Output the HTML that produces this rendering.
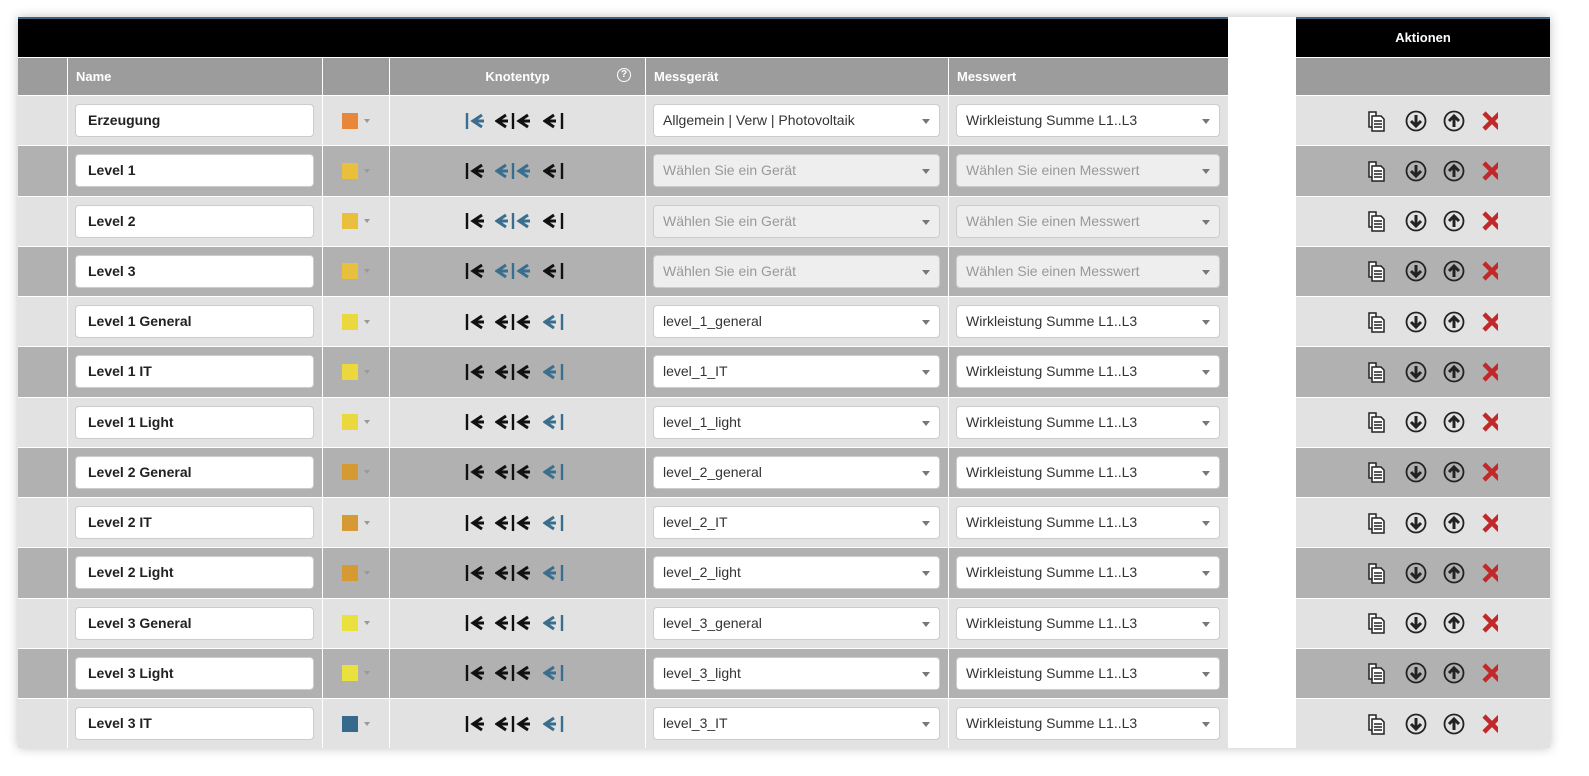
<!DOCTYPE html>
<html style="width:1589px;height:776px;overflow:hidden"><head><meta charset="utf-8"><style>
*{box-sizing:border-box;margin:0;padding:0}
body{width:1589px;height:776px;background:#fff;font-family:"Liberation Sans",Arial,sans-serif;position:relative;overflow:hidden}
.wrap{position:absolute;left:18px;top:17px;width:1532px;height:731px;box-shadow:0 0 10px rgba(0,0,0,.25)}
.t{position:absolute;top:17px;left:18px;width:1210px}
.a{position:absolute;top:17px;left:1296px;width:254px}
.bar{height:2px;background:#3d6380}
.blk{height:38px;background:#000;color:#fff;font-weight:bold;font-size:13px;text-align:center;line-height:38px}
.r{display:flex;border-top:1px solid #fff}
.h{height:38px;background:#9c9c9c;color:#fff;font-weight:bold;font-size:13px}
.row{height:50.25px}
.l{background:#e2e2e2}.d{background:#b1b1b1}
.c{border-left:1px solid #fff;position:relative;display:flex;align-items:center;flex:none}
.c:first-child{border-left:none}
.w0{width:49px}.w1{width:255px}.w2{width:67px}.w3{width:256px}.w4{width:303px}.w5{width:280px}
.inp{position:absolute;left:7px;width:239px;height:33px;background:#fff;border:1px solid #ccc;border-radius:4px;font-weight:bold;font-size:14px;color:#222;padding-left:12px;line-height:31px}
.sw{position:absolute;left:19px;width:16px;height:16px}
.car{position:absolute;left:41px;top:50%;margin-top:-2px;border:3px solid transparent;border-top:4px solid #999}
.sel{position:absolute;left:7px;right:8px;height:33px;background:#fff;border:1px solid #ccc;border-radius:4px;font-size:14px;color:#333;padding-left:9px;line-height:31px}
.sel:after{content:"";position:absolute;right:9px;top:14px;border:4px solid transparent;border-top:5px solid #777}
.dis{background:#eee;color:#999}
.kn{position:absolute;left:74px;top:50%;margin-top:-9px}
.act{width:254px;display:flex;align-items:center;justify-content:center}
</style></head><body>
<div class="wrap"></div>
<svg width="0" height="0" style="position:absolute;left:0;top:0;overflow:hidden">
<defs>
<g id="L"><path d="M2 1V17" stroke-width="2.4"/><path d="M17 3L8 9L17 15M9 9H19" stroke-width="3" fill="none"/></g>
<g id="M"><path d="M11 3L2 9L11 15M3 9H13" stroke-width="3" fill="none"/><path d="M18 1V17" stroke-width="2.4"/><path d="M33 3L24 9L33 15M25 9H35" stroke-width="3" fill="none"/></g>
<g id="R"><path d="M11 3L2 9L11 15M3 9H13" stroke-width="3" fill="none"/><path d="M19 1V17" stroke-width="2.4"/></g>
</defs></svg>
<div class="t">
<div class="bar"></div>
<div class="blk"></div>
<div class="r h">
<div class="c w0"></div><div class="c w1" style="padding-left:8px">Name</div><div class="c w2"></div>
<div class="c w3" style="justify-content:center">Knotentyp<span style="position:absolute;right:14px;top:10px;width:14px;height:14px;border:1.3px solid #fff;border-radius:50%;font-size:10px;line-height:12px;text-align:center">?</span></div>
<div class="c w4" style="padding-left:8px">Messgerät</div><div class="c w5" style="padding-left:8px">Messwert</div>
</div>
<div id="rows"></div>
</div>
<div class="a">
<div class="bar"></div>
<div class="blk">Aktionen</div>
<div class="r h"></div>
<div id="arows"></div>
</div>
<script>
var data=[
["Erzeugung","#e8873a",0,"Allgemein | Verw | Photovoltaik","Wirkleistung Summe L1..L3"],
["Level 1","#e9bf3e",1,null,null],
["Level 2","#e9bf3e",1,null,null],
["Level 3","#e9bf3e",1,null,null],
["Level 1 General","#ead83e",2,"level_1_general","Wirkleistung Summe L1..L3"],
["Level 1 IT","#ead83e",2,"level_1_IT","Wirkleistung Summe L1..L3"],
["Level 1 Light","#ead83e",2,"level_1_light","Wirkleistung Summe L1..L3"],
["Level 2 General","#d69a35",2,"level_2_general","Wirkleistung Summe L1..L3"],
["Level 2 IT","#d69a35",2,"level_2_IT","Wirkleistung Summe L1..L3"],
["Level 2 Light","#d69a35",2,"level_2_light","Wirkleistung Summe L1..L3"],
["Level 3 General","#e9e23e",2,"level_3_general","Wirkleistung Summe L1..L3"],
["Level 3 Light","#e9e23e",2,"level_3_light","Wirkleistung Summe L1..L3"],
["Level 3 IT","#356a8c",2,"level_3_IT","Wirkleistung Summe L1..L3"]];
var h="",a="";
function ic(id,on,x,w){var c=on?"#3a6e8e":"#111";return '<svg width="'+w+'" height="18" style="position:absolute;left:'+x+'px;top:0"><use href="#'+id+'" stroke="'+c+'"/></svg>';}
data.forEach(function(d,i){var cl=i%2?"d":"l";
h+='<div class="r row '+cl+'"><div class="c w0"></div><div class="c w1"><div class="inp">'+d[0]+'</div></div><div class="c w2"><div class="sw" style="background:'+d[1]+'"></div><div class="car"></div></div><div class="c w3"><div class="kn" style="width:110px;height:18px">'+ic("L",d[2]==0,1,22)+ic("M",d[2]==1,31,38)+ic("R",d[2]==2,79,22)+'</div></div>';
h+='<div class="c w4">'+(d[3]?'<div class="sel">'+d[3]+'</div>':'<div class="sel dis">Wählen Sie ein Gerät</div>')+'</div><div class="c w5">'+(d[4]?'<div class="sel">'+d[4]+'</div>':'<div class="sel dis">Wählen Sie einen Messwert</div>')+'</div></div>';
a+='<div class="r row '+cl+'"><div class="act"><svg width="150" height="24" viewBox="0 0 150 24"><g fill="none" stroke="#222" stroke-width="1.5"><path d="M21 3h7v15h-7z" fill="#fff"/><path d="M24 7h9l3 3v12h-12z" fill="#fff"/><path d="M26 12h8M26 15h8M26 18h8"/><circle cx="68" cy="12" r="9.5" stroke-width="1.8"/><path d="M68 6v11M63 12l5 5l5-5" stroke-width="3"/><circle cx="106" cy="12" r="9.5" stroke-width="1.8"/><path d="M106 18V7M101 12l5-5l5 5" stroke-width="3"/></g><path d="M138 4l16 16M154 4l-16 16" stroke="#c0282a" stroke-width="4.5" transform="translate(-2,0)"/></svg></div></div>';});
document.getElementById("rows").innerHTML=h;document.getElementById("arows").innerHTML=a;
</script>
</body></html>
